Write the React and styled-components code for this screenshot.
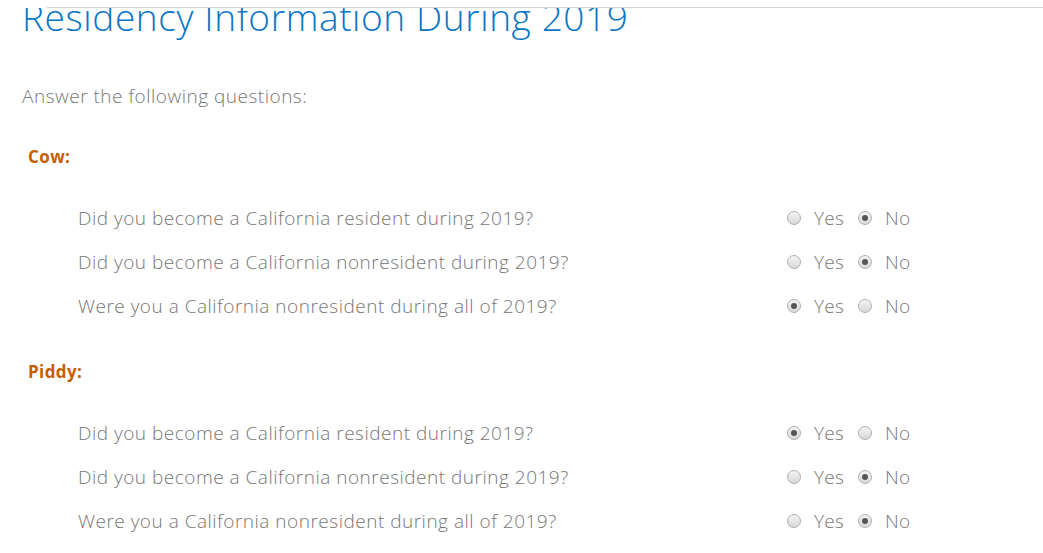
import styled, { createGlobalStyle } from "styled-components";

const GlobalStyle = createGlobalStyle`
  html, body {
    margin: 0;
    padding: 0;
    background: #ffffff;
    overflow: hidden;
  }
  body {
    font-family: "Open Sans", Lato, sans-serif;
    font-variant-ligatures: none;
  }
`

const Page = styled.div`
  width: 1043px;
  height: 553px;
  overflow: hidden;
  background: #fff;
`

const TopBar = styled.div`
  margin-left: 47px;
  height: 7px;
  border-bottom: 1px solid #d6d6d6;
`

const TitleClip = styled.div`
  height: 38px;
  overflow: hidden;
  padding-left: 22px;
`

const Title = styled.h1`
  margin: -13px 0 0;
  font-weight: 300;
  font-size: 37px;
  letter-spacing: 0.6px;
  line-height: 44px;
  color: #0b76c6;
  white-space: nowrap;
`

const Intro = styled.p`
  margin: 38px 0 0 22px;
  font-weight: 300;
  font-size: 19px;
  letter-spacing: 0.5px;
  line-height: 24px;
  color: #777;
`

const Person = styled.h3`
  margin: ${(props) => props.top}px 0 0 28px;
  font-weight: 700;
  font-size: 17px;
  letter-spacing: 0.4px;
  line-height: 20px;
  color: #c65f00;
`

const Questions = styled.div`
  margin-top: 29px;
  display: flex;
  flex-direction: column;
`

const Row = styled.div`
  display: flex;
  align-items: center;
  height: 44px;
`

const Question = styled.span`
  width: 709px;
  padding-left: 78px;
  font-weight: 300;
  font-size: 19px;
  letter-spacing: 0.5px;
  color: #777;
  white-space: nowrap;
`

const Choices = styled.div`
  display: flex;
  align-items: center;
`

const Choice = styled.label`
  display: flex;
  align-items: center;
  gap: 13px;
  width: ${(props) => props.width}px;
  font-weight: 300;
  font-size: 19px;
  letter-spacing: 0.3px;
  color: #777;
`

const Radio = styled.span`
  position: relative;
  flex: none;
  width: 14px;
  height: 14px;
  border-radius: 50%;
  box-sizing: border-box;
  border: 1px solid #b0b0b0;
  background: linear-gradient(#f4f4f4, #d8d8d8);

  &::after {
    content: "";
    display: ${(props) => (props.checked ? "block" : "none")};
    position: absolute;
    left: 3px;
    top: 3px;
    width: 6px;
    height: 6px;
    border-radius: 50%;
    background: #555;
  }
`

const questionText = [
  "Did you become a California resident during 2019?",
  "Did you become a California nonresident during 2019?",
  "Were you a California nonresident during all of 2019?",
]

const people = [
  { name: "Cow", top: 39, answers: [false, false, true] },
  { name: "Piddy", top: 34, answers: [true, false, false] },
]

const App = () => {
  return (
    <>
      <GlobalStyle />
      <Page>
        <TopBar />
        <TitleClip>
          <Title>Residency Information During 2019</Title>
        </TitleClip>
        <Intro>Answer the following questions:</Intro>
        {people.map((person) => (
          <div key={person.name}>
            <Person top={person.top}>{person.name}:</Person>
            <Questions>
              {questionText.map((q, i) => (
                <Row key={q}>
                  <Question>{q}</Question>
                  <Choices>
                    <Choice width={71}>
                      <Radio checked={person.answers[i]} />
                      Yes
                    </Choice>
                    <Choice width={60}>
                      <Radio checked={!person.answers[i]} />
                      No
                    </Choice>
                  </Choices>
                </Row>
              ))}
            </Questions>
          </div>
        ))}
      </Page>
    </>
  )
}

export default App;
